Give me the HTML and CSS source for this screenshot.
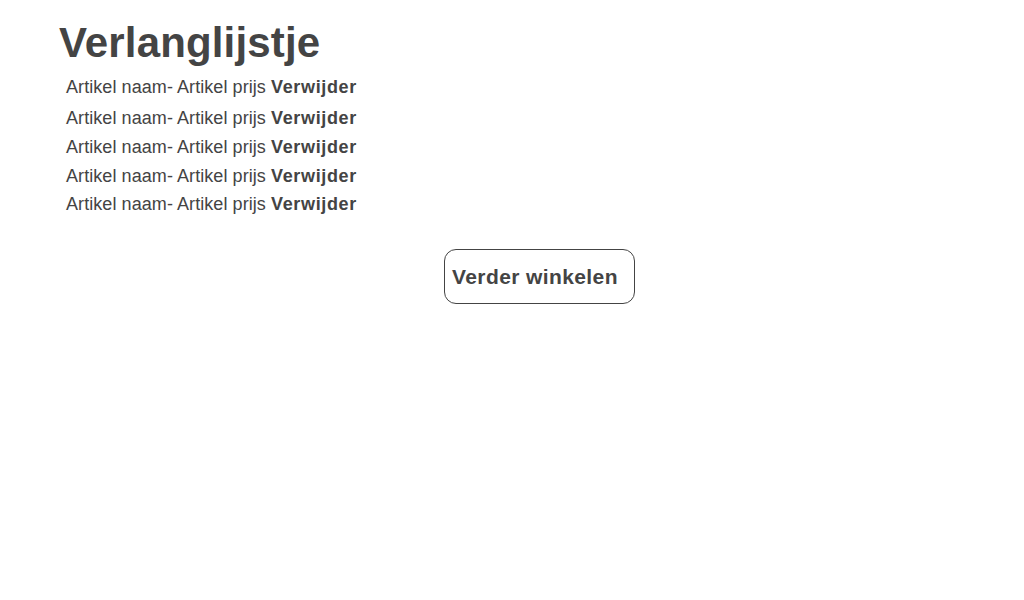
FILE: index.html
```html
<!DOCTYPE html>
<html lang="nl">
<head>
<meta charset="utf-8">
<title>Verlanglijstje</title>
<link rel="stylesheet" href="styles.css">
</head>
<body>
<main class="page">
  <h1 class="title">Verlanglijstje</h1>
  <ul class="list">
    <li class="item">Artikel naam- Artikel prijs <b class="remove">Verwijder</b></li>
    <li class="item item-gap">Artikel naam- Artikel prijs <b class="remove">Verwijder</b></li>
    <li class="item">Artikel naam- Artikel prijs <b class="remove">Verwijder</b></li>
    <li class="item">Artikel naam- Artikel prijs <b class="remove">Verwijder</b></li>
    <li class="item item-last">Artikel naam- Artikel prijs <b class="remove">Verwijder</b></li>
  </ul>
  <div class="actions">
    <button class="btn">Verder winkelen</button>
  </div>
</main>
</body>
</html>
```

FILE: styles.css
```css
html, body {
  margin: 0;
  padding: 0;
  background: #fff;
}
body {
  font-family: "Liberation Sans", Arial, sans-serif;
  color: #444;
}
.page {
  padding: 19px 0 0 59px;
}
.title {
  margin: 0;
  font-size: 42px;
  font-weight: bold;
  line-height: 48px;
  letter-spacing: 0.15px;
}
.list {
  list-style: none;
  margin: 6px 0 0 7px;
  padding: 0;
}
.item {
  font-size: 18px;
  line-height: 29px;
  letter-spacing: 0.07px;
}
.item-gap {
  margin-top: 2px;
}
.item-last {
  margin-top: -1px;
}
.remove {
  font-weight: bold;
  letter-spacing: 0.65px;
}
.actions {
  display: flex;
  padding-left: 385px;
  margin-top: 30px;
}
.btn {
  font-family: "Liberation Sans", Arial, sans-serif;
  font-size: 21px;
  font-weight: bold;
  letter-spacing: 0.4px;
  color: #444;
  background: #fff;
  border: 1px solid #444;
  border-radius: 12px;
  height: 55px;
  width: 191px;
  padding: 0 0 0 7px;
  text-align: left;
}
```
